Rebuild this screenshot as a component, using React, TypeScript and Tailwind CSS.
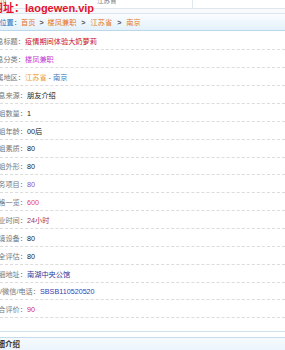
import React from "react";

const font = '"Liberation Sans", "Noto Sans CJK SC", sans-serif';

type Row = { label: string; value: React.ReactNode; space?: boolean; lw?: number };

const rows: Row[] = [
  { label: "信息标题：", value: <span className="text-[#c8102e]">疫情期间体验大奶萝莉</span> },
  { label: "信息分类：", value: <span className="text-[#c23bd0]">楼凤兼职</span> },
  {
    label: "所属地区：",
    value: (
      <>
        <span className="text-[#e8963a]">江苏省</span>
        <span className="text-[#666]"> - </span>
        <span className="text-[#3a78b8]">南京</span>
      </>
    ),
  },
  { label: "信息来源：", value: <span className="text-[#222]">朋友介绍</span>, space: true },
  { label: "小姐数量：", value: <span className="text-[#222]">1</span>, space: true },
  { label: "小姐年龄：", value: <span className="text-[#222]">00后</span>, space: true },
  { label: "小姐素质：", value: <span className="text-[#222]">80</span>, space: true },
  { label: "小姐外形：", value: <span className="text-[#222]">80</span>, space: true },
  { label: "服务项目：", value: <span className="text-[#8a4fd6]">80</span>, space: true },
  { label: "价格一览：", value: <span className="text-[#e2465a]">600</span>, space: true },
  { label: "营业时间：", value: <span className="text-[#a8344a]">24小时</span>, space: true },
  { label: "环境设备：", value: <span className="text-[#222]">80</span>, space: true },
  { label: "安全评估：", value: <span className="text-[#222]">80</span>, space: true },
  { label: "详细地址：", value: <span className="text-[#2c3a9a]">南湖中央公馆</span>, space: true },
  { label: "QQ/微信/电话：", value: <span className="text-[#3a3ab0]">SBSB110520520</span>, space: true, lw: 40 },
  { label: "综合评价：", value: <span className="text-[#d0285a]">90</span>, space: true },
];

export default function App() {
  return (
    <div
      className="relative w-[285px] h-[350px] overflow-hidden bg-white"
      style={{ fontFamily: font }}
    >
      {/* top table row (cut) */}
      <div className="flex h-[9px] border-b border-[#e1e7ec] bg-white text-[6.5px] text-[#777] leading-none">
        <div className="w-[97px] -mt-[2px]">市</div>
        <div className="w-[96px] -mt-[2px] border-r border-[#e1e7ec]">江苏省</div>
        <div className="flex-1"></div>
      </div>
      <div className="h-[4px] bg-[#f8fafb]"></div>

      {/* breadcrumb */}
      <div className="h-[18px] flex items-center border-t border-b border-t-[#dde6ee] border-b-[#bcd6ea] bg-gradient-to-b from-[#fbfdff] to-[#e3f1fb] text-[7.2px] leading-none whitespace-nowrap">
        <div className="w-[21px] shrink-0 flex justify-end">
          <span className="shrink-0 pt-[1px] text-[#2f6fb6]">当前位置：</span>
        </div>
        <span className="pt-[1px] text-[#e7751f]">首页</span>
        <span className="mx-[4px] pt-[1px] font-bold text-[#555]">&gt;</span>
        <span className="pt-[1px] text-[#e7751f]">楼凤兼职</span>
        <span className="mx-[5px] pt-[1px] font-bold text-[#555]">&gt;</span>
        <span className="pt-[1px] text-[#e7751f]">江苏省</span>
        <span className="mx-[5px] pt-[1px] font-bold text-[#555]">&gt;</span>
        <span className="pt-[1px] text-[#e7751f]">南京</span>
      </div>

      {/* info rows */}
      <div className="pt-[1.5px] pb-[13px] border-b border-[#cfdfeb]">
        {rows.map((r, i) => (
          <div
            key={i}
            className="h-[17.86px] flex items-center border-b border-dashed border-[#dcdcdc] text-[7.2px] leading-none whitespace-nowrap"
          >
            <div
              className={
                "shrink-0 flex justify-end " +
                (r.lw ? "w-[40px]" : r.space ? "w-[27px]" : "w-[25px]")
              }
            >
              <span className="shrink-0 pt-[2px] text-[#777]">{r.label}</span>
            </div>
            <span className="pt-[2px]">{r.value}</span>
          </div>
        ))}
      </div>

      <div className="h-[5px] bg-white"></div>

      {/* next box header */}
      <div className="h-[20px] border-t border-[#c6dcec] bg-gradient-to-b from-[#f5fafe] to-[#e6f2fc] flex items-start">
        <div className="w-[20px] shrink-0 flex justify-end mt-[3px]">
          <span className="shrink-0 text-[7.5px] font-bold text-[#333] leading-none">详细介绍</span>
        </div>
      </div>

      {/* overlay red url */}
      <div className="absolute left-0 top-[3px] flex items-center whitespace-nowrap leading-none font-bold text-[#e3132f]">
        <div className="w-[25px] shrink-0 flex justify-end">
          <span className="shrink-0 text-[11px]">网址：</span>
        </div>
        <span className="text-[11px]">laogewen.vip</span>
      </div>
    </div>
  );
}
